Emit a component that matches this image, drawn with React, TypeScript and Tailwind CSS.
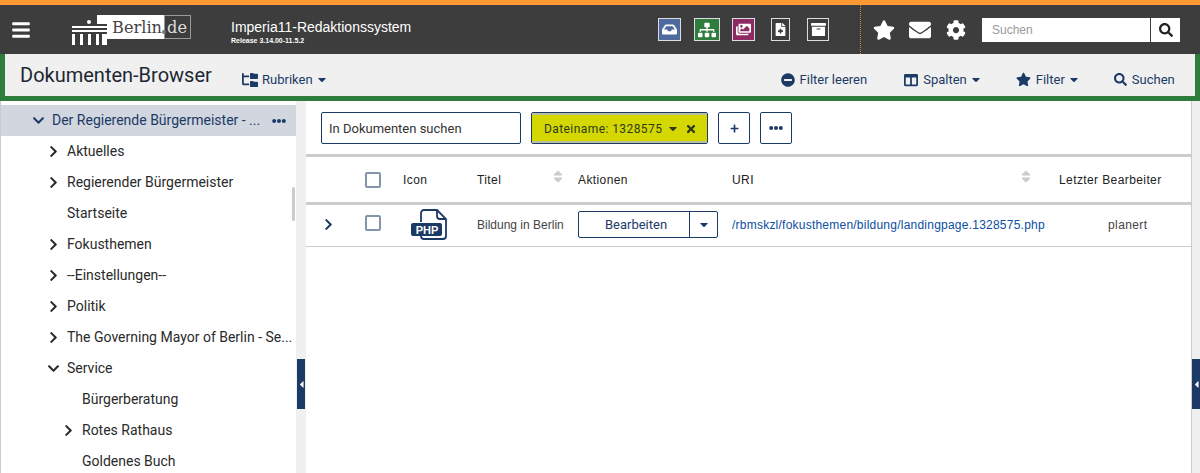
import React from 'react';
import {
    FaBars,
    FaCaretDown,
    FaCaretLeft,
    FaChevronDown,
    FaChevronRight,
    FaCog,
    FaColumns,
    FaEllipsisH,
    FaEnvelope,
    FaInbox,
    FaMinusCircle,
    FaPlus,
    FaSearch,
    FaSitemap,
    FaSort,
    FaStar,
    FaTimes,
    FaImages,
    FaFileMedical,
    FaArchive,
} from 'react-icons/fa';
import { FaFolderTree } from 'react-icons/fa6';

const navy = 'text-[#1c3a66]';

function Logo() {
    return (
        <svg width="120" height="30" viewBox="0 0 120 30" className="ml-[41px] shrink-0">
            {/* gate */}
            <g fill="#fff">
                <rect x="0" y="11" width="35" height="2" />
                <rect x="0" y="15" width="35" height="2" />
                <circle cx="17" cy="7" r="2" />
                <rect x="0" y="19" width="3" height="11" />
                <rect x="8" y="19" width="3" height="11" />
                <rect x="16" y="19" width="3" height="11" />
                <rect x="24" y="19" width="3" height="11" />
                <rect x="30" y="19" width="5" height="11" />
                <rect x="25" y="0" width="10" height="9" />
                <rect x="35" y="0" width="57" height="24" />
            </g>
            <rect x="92.5" y="0.5" width="26" height="23" fill="#3d3d3d" stroke="#999" />
            <text x="40" y="18" fontFamily="'DejaVu Serif', serif" fontSize="17" textLength="50" lengthAdjust="spacingAndGlyphs" fill="#444">
                Berlin
            </text>
            <circle cx="92" cy="17" r="2" fill="#777" />
            <text x="95" y="18" fontFamily="'DejaVu Serif', serif" fontSize="17" textLength="20" lengthAdjust="spacingAndGlyphs" fill="#ddd">
                de
            </text>
        </svg>
    );
}

function ToolButton({ bg, w, ml, children }: { bg: string; w: string; ml: string; children: React.ReactNode }) {
    return (
        <div className={`flex h-[23px] items-center justify-center border border-[#ddd] text-white ${bg} ${w} ${ml}`}>
            {children}
        </div>
    );
}

function TopBar() {
    return (
        <div className="flex h-[49px] items-center bg-[#3d3d3d] text-white">
            <FaBars className="ml-[11px] size-[20px] shrink-0" />
            <Logo />
            <div className="mt-[5px] ml-[39px] w-[180px] whitespace-nowrap">
                <div className="text-[14px] leading-[17px]">Imperia11-Redaktionssystem</div>
                <div className="mt-[1px] text-[7px] leading-[8px] font-bold">Release 3.14.00-11.5.2</div>
            </div>
            <ToolButton bg="bg-[#4f6a9e]" w="w-[23px]" ml="ml-[247px]">
                <FaInbox className="size-[15px]" />
            </ToolButton>
            <ToolButton bg="bg-[#2e7d3e]" w="w-[26px]" ml="ml-[13px]">
                <FaSitemap className="size-[18px]" />
            </ToolButton>
            <ToolButton bg="bg-[#8e2a63]" w="w-[23px]" ml="ml-[12px]">
                <FaImages className="size-[15px]" />
            </ToolButton>
            <ToolButton bg="bg-[#3d3d3d]" w="w-[19px]" ml="ml-[16px]">
                <FaFileMedical className="size-[13px]" />
            </ToolButton>
            <ToolButton bg="bg-[#3d3d3d]" w="w-[22px]" ml="ml-[17px]">
                <FaArchive className="size-[15px]" />
            </ToolButton>
            <div className="ml-[31px] h-full border-l border-dotted border-[#e08a2a]" />
            <FaStar className="ml-[12px] size-[22px]" />
            <FaEnvelope className="ml-[14px] size-[22px]" />
            <FaCog className="ml-[15px] size-[20px]" />
            <div className="ml-[16px] flex h-[24px] w-[198px] bg-white">
                <div className="flex-1 border-r border-[#3d3d3d] pl-[10px] text-[12px] leading-[24px] text-[#999]">
                    Suchen
                </div>
                <div className="flex w-[29px] items-center justify-center text-[#222]">
                    <FaSearch className="size-[14px]" />
                </div>
            </div>
        </div>
    );
}

function Caret({ className }: { className: string }) {
    return <FaCaretDown className={`h-[13px] w-[8px] ${className}`} />;
}

function ToolItem({ icon, label, caret, ml }: { icon: React.ReactNode; label: string; caret?: boolean; ml: string }) {
    return (
        <div className={`mt-[10px] flex items-center text-[13px] ${navy} ${ml}`}>
            {icon}
            <span className="ml-[5px]">{label}</span>
            {caret && <Caret className="ml-[5px]" />}
        </div>
    );
}

function BrowserBar() {
    return (
        <div className="flex h-[47px] items-center border-x-[5px] border-b-[5px] border-[#2e7d3e] bg-[#f0f0f0] pb-[1px] pl-[15px] font-['Roboto',sans-serif]">
            <h1 className="w-[222px] text-[20px] text-[#1d2733]">Dokumenten-Browser</h1>
            <div className={`mt-[10px] flex items-center text-[13px] ${navy}`}>
                <FaFolderTree className="size-[16px]" />
                <span className="ml-[4px]">Rubriken</span>
                <Caret className="ml-[5px]" />
            </div>
            <ToolItem icon={<FaMinusCircle className="size-[14px]" />} label="Filter leeren" ml="ml-[455px]" />
            <ToolItem icon={<FaColumns className="size-[14px]" />} label="Spalten" caret ml="ml-[37px]" />
            <ToolItem icon={<FaStar className="size-[15px]" />} label="Filter" caret ml="ml-[36px]" />
            <ToolItem icon={<FaSearch className="size-[13px]" />} label="Suchen" ml="ml-[36px]" />
        </div>
    );
}

const treeItems: { label: string; level: number; icon?: 'right' | 'down' }[] = [
    { label: 'Aktuelles', level: 1, icon: 'right' },
    { label: 'Regierender Bürgermeister', level: 1, icon: 'right' },
    { label: 'Startseite', level: 1 },
    { label: 'Fokusthemen', level: 1, icon: 'right' },
    { label: '--Einstellungen--', level: 1, icon: 'right' },
    { label: 'Politik', level: 1, icon: 'right' },
    { label: 'The Governing Mayor of Berlin - Se...', level: 1, icon: 'right' },
    { label: 'Service', level: 1, icon: 'down' },
    { label: 'Bürgerberatung', level: 2 },
    { label: 'Rotes Rathaus', level: 2, icon: 'right' },
    { label: 'Goldenes Buch', level: 2 },
];

function Sidebar() {
    return (
        <div className="relative w-[296px] shrink-0 overflow-hidden border-l border-[#ccc] bg-white pt-[4px] text-[14px] text-[#2a2a2a]">
            <div className={`flex h-[31px] items-center bg-[#d1d6df] pr-[10px] pl-[31px] ${navy}`}>
                <FaChevronDown className="size-[13px]" />
                <span className="ml-[7px] flex-1">Der Regierende Bürgermeister - ...</span>
                <FaEllipsisH className="size-[14px]" />
            </div>
            {treeItems.map((item) => (
                <div
                    key={item.label}
                    className={`relative flex h-[31px] items-center ${item.level === 1 ? 'pl-[66px]' : 'pl-[81px]'}`}
                >
                    {item.icon === 'right' && <FaChevronRight className="absolute ml-[-18px] h-[13px] w-[9px]" />}
                    {item.icon === 'down' && <FaChevronDown className="absolute ml-[-20px] size-[13px]" />}
                    <span className="whitespace-nowrap">{item.label}</span>
                </div>
            ))}
            {/* scrollbar thumb */}
            <div className="absolute top-[86px] right-[1px] h-[34px] w-[3px] rounded-sm bg-[#ccc]" />
        </div>
    );
}

function CollapseStrip({ className, tab }: { className: string; tab: string }) {
    return (
        <div className={`relative shrink-0 bg-[#f0f0f0] ${className}`}>
            <div className={`absolute top-[258px] flex h-[50px] w-[8px] items-center justify-center bg-[#1c3a66] text-white ${tab}`}>
                <FaCaretLeft className="h-[11px] w-[5px]" />
            </div>
        </div>
    );
}

function Checkbox() {
    return <div className="size-[16px] rounded-[2px] border-2 border-[#8494ab] bg-white" />;
}

function PhpIcon() {
    return (
        <svg width="38" height="34" viewBox="0 0 38 34">
            <path
                d="M10 14V5a3 3 0 0 1 3-3h13l9 9v17a3 3 0 0 1-3 3H13a3 3 0 0 1-3-3"
                fill="none"
                stroke="#1c3a66"
                strokeWidth="1.8"
            />
            <path d="M26 2v6a3 3 0 0 0 3 3h6" fill="none" stroke="#1c3a66" strokeWidth="1.8" />
            <rect x="0" y="15" width="31" height="13" rx="2" fill="#1c3a66" />
            <text
                x="16"
                y="26"
                textAnchor="middle"
                fontFamily="'Liberation Sans', sans-serif"
                fontWeight="700"
                fontSize="11"
                fill="#fff"
            >
                PHP
            </text>
        </svg>
    );
}

const tableGrid = 'grid grid-cols-[59px_38px_74px_101px_154px_327px_1fr] items-center';

function SortIcon() {
    return <FaSort className="mb-[6px] h-[15px] w-[10px] text-[#ccc]" />;
}

function Content() {
    return (
        <div className="min-w-0 flex-1 bg-white font-['Liberation_Sans',sans-serif]">
            <div className="flex h-[53px] items-start gap-[10px] pt-[11px] pl-[15px] font-['Roboto',sans-serif] text-[13px]">
                <div className="flex h-[32px] w-[200px] items-center rounded-[2px] border border-[#1c3a66] pt-[1px] pl-[7px] text-[#333]">
                    In Dokumenten suchen
                </div>
                <div className="h-[32px] w-[177px] rounded-[2px] border border-[#1c3a66]">
                    <div className="flex h-full items-center border-y-2 border-y-[#b9bfa0] bg-[#d4d800] pt-[1px] pl-[12px] text-[12px] tracking-[0.42px] text-[#2e3a20]">
                        Dateiname: 1328575
                        <Caret className="ml-[7px]" />
                        <FaTimes className="ml-[8px] size-[12px]" />
                    </div>
                </div>
                <div className={`flex size-[32px] items-center justify-center rounded-[2px] border border-[#1c3a66] ${navy}`}>
                    <FaPlus className="size-[9px]" />
                </div>
                <div className={`flex size-[32px] items-center justify-center rounded-[2px] border border-[#1c3a66] ${navy}`}>
                    <FaEllipsisH className="size-[14px]" />
                </div>
            </div>
            <div className={`${tableGrid} h-[51px] border-y-[3px] border-[#ccc] text-[12px] tracking-[0.4px] text-[#222]`}>
                <div />
                <Checkbox />
                <div>Icon</div>
                <div className="flex items-center justify-between pr-[15px]">
                    Titel
                    <SortIcon />
                </div>
                <div>Aktionen</div>
                <div className="flex items-center justify-between pr-[28px]">
                    URI
                    <SortIcon />
                </div>
                <div className="whitespace-nowrap">Letzter Bearbeiter</div>
            </div>
            <div className={`${tableGrid} h-[42px] border-b border-[#ccc] pb-[2px] text-[12px] text-[#444]`}>
                <FaChevronRight className={`ml-[18px] h-[13px] w-[9px] ${navy}`} />
                <div className="mb-[3px]">
                    <Checkbox />
                </div>
                <div className="mt-[1px] ml-[8px]">
                    <PhpIcon />
                </div>
                <div className="whitespace-nowrap">Bildung in Berlin</div>
                <div className="flex h-[27px] w-[140px] items-center rounded-[2px] border border-[#1c3a66] font-['Roboto',sans-serif] text-[13px] text-[#1c3a66]">
                    <div className="flex-1 pl-[4px] text-center">Bearbeiten</div>
                    <div className="flex h-full w-[28px] items-center justify-center border-l border-[#1c3a66]">
                        <Caret className="" />
                    </div>
                </div>
                <div className="whitespace-nowrap tracking-[0.23px] text-[#0b4ea2]">/rbmskzl/fokusthemen/bildung/landingpage.1328575.php</div>
                <div className="pl-[49px] tracking-[0.4px]">planert</div>
            </div>
        </div>
    );
}

export default function App() {
    return (
        <div className="flex h-[473px] w-[1200px] flex-col overflow-hidden font-['Roboto',sans-serif]">
            <div className="h-[5px] bg-[#ff9933]" />
            <div className="font-['Liberation_Sans',sans-serif]">
                <TopBar />
            </div>
            <BrowserBar />
            <div className="flex min-h-0 flex-1">
                <Sidebar />
                <CollapseStrip className="w-[10px]" tab="right-[1px]" />
                <Content />
                <div className="w-[1px] bg-[#ccc]" />
                <CollapseStrip className="w-[8px]" tab="right-0" />
            </div>
        </div>
    );
}
